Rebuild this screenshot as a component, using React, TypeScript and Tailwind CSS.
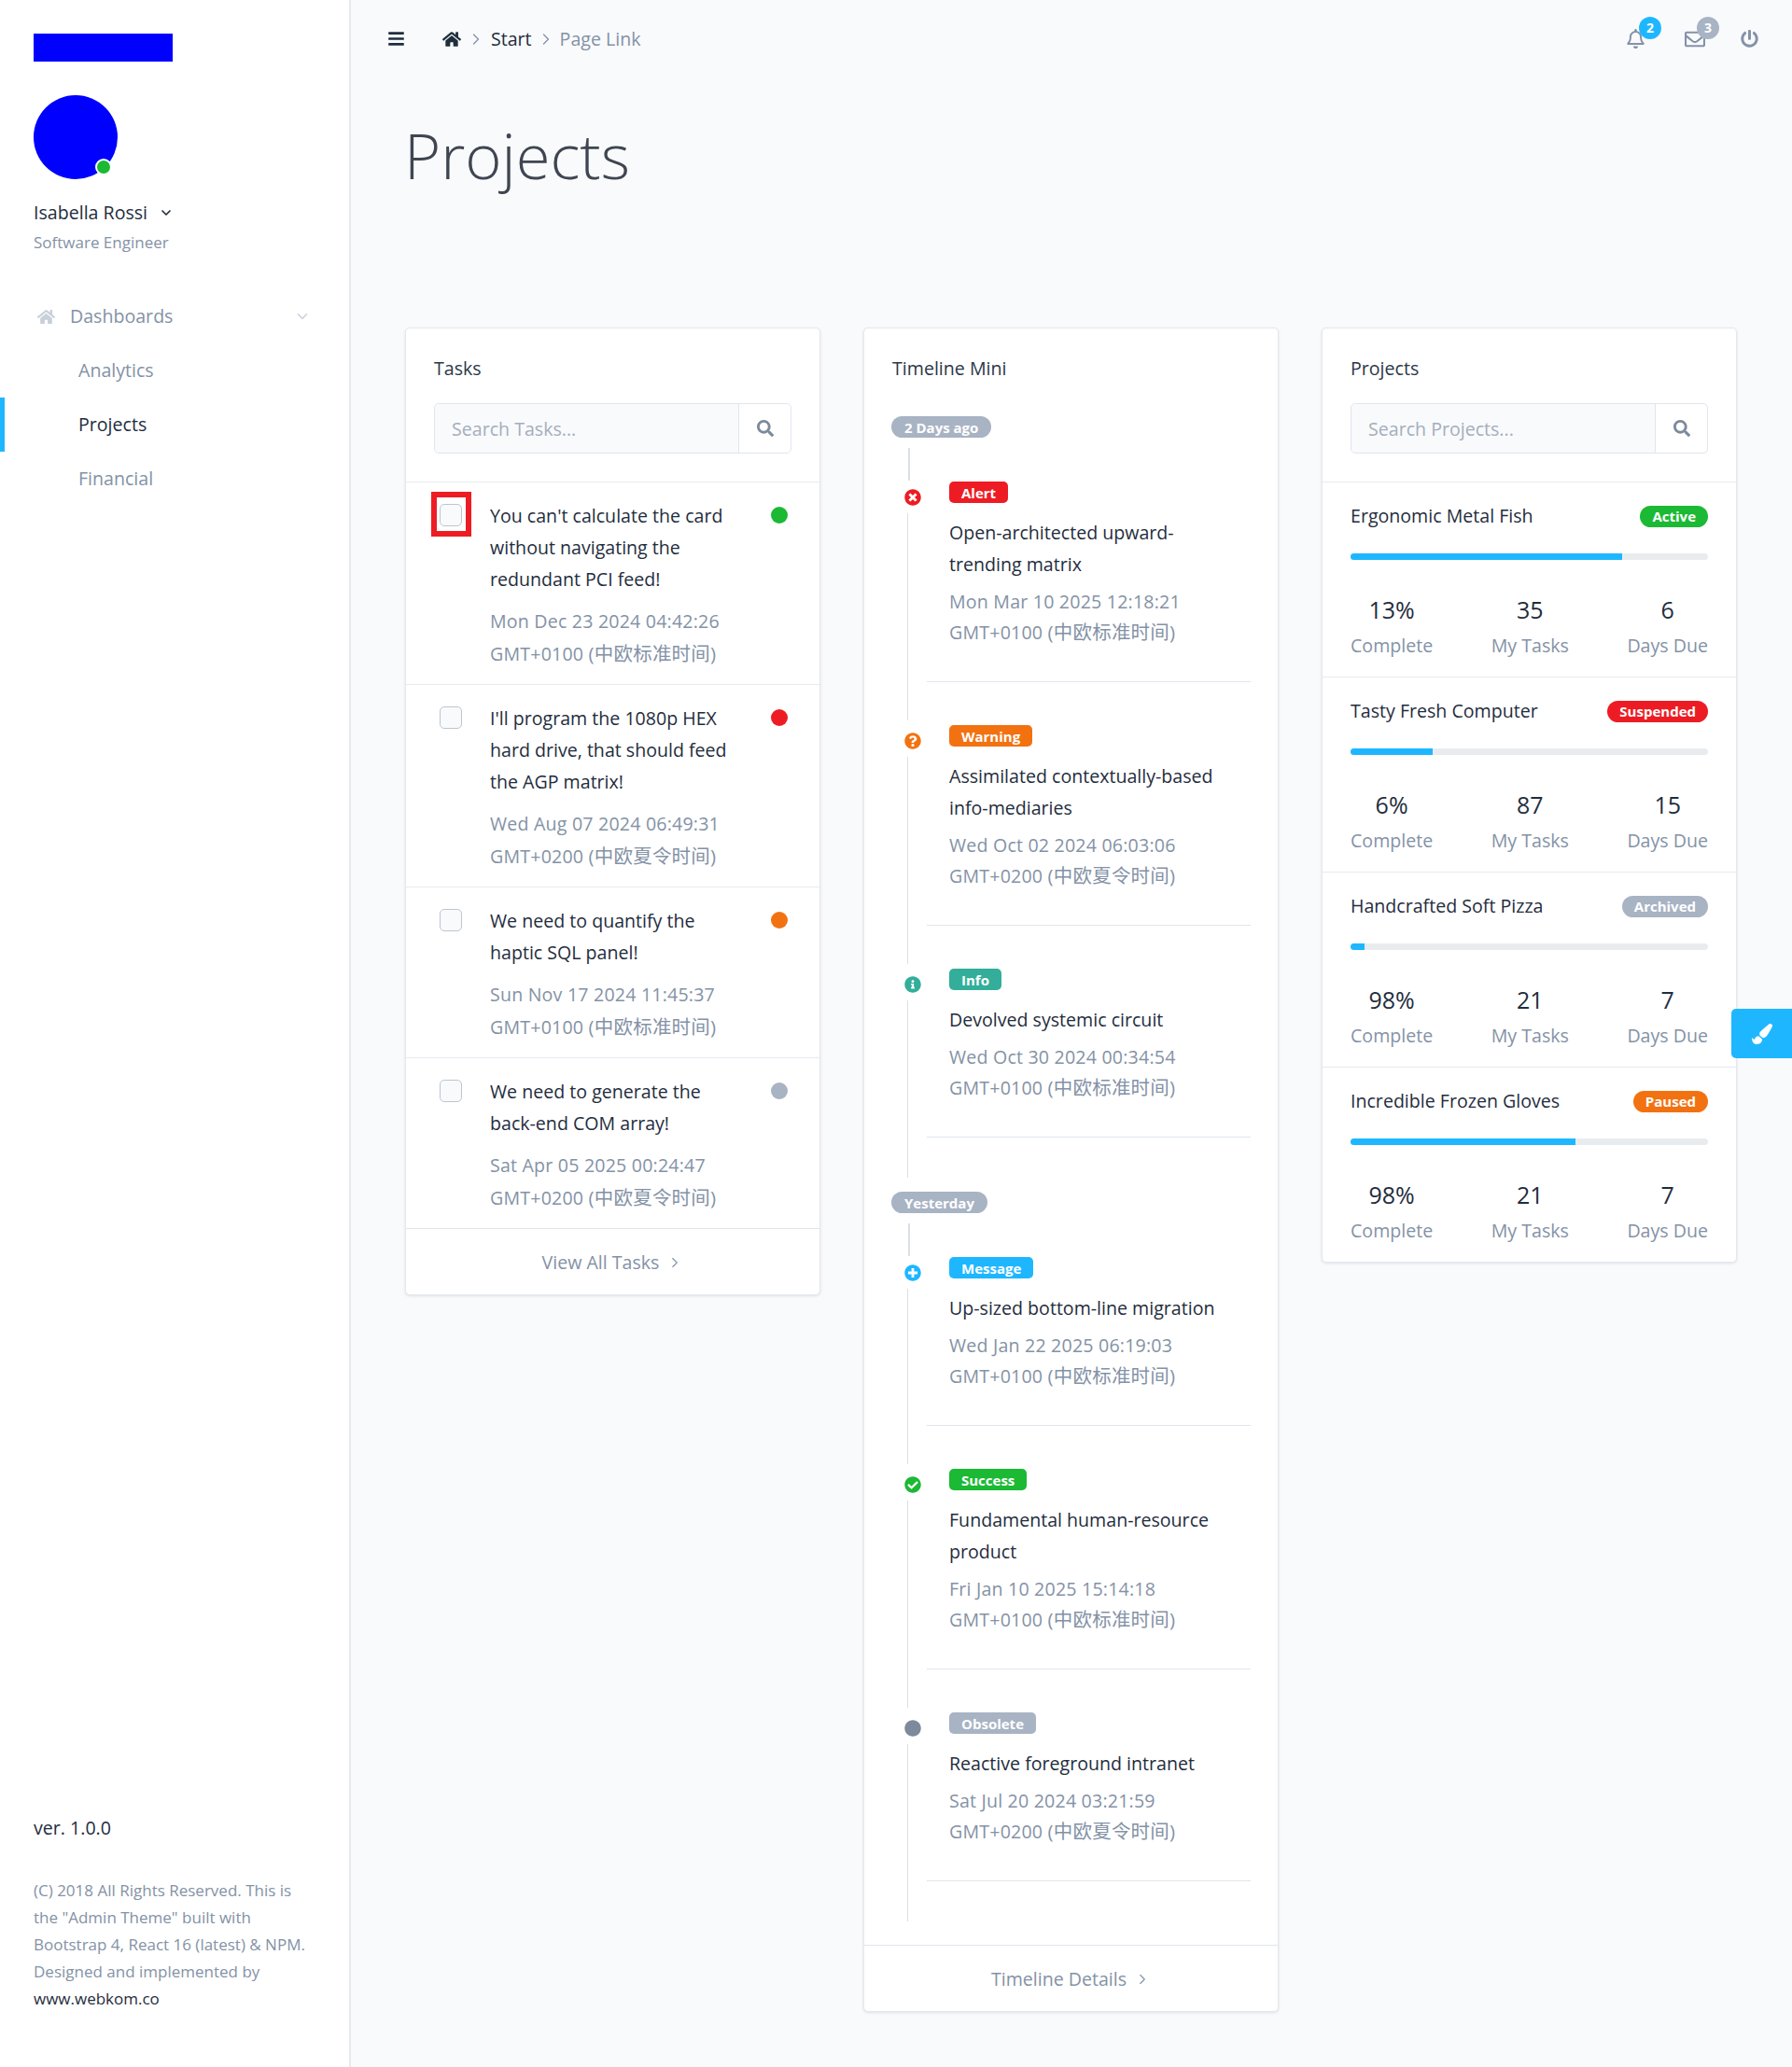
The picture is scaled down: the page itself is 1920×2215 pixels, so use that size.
import { ReactNode } from 'react'
import { ChevronDown, ChevronRight } from 'lucide-react'
import {
  FaBars,
  FaCheckCircle,
  FaCircle,
  FaHome,
  FaInfoCircle,
  FaPaintBrush,
  FaPlusCircle,
  FaPowerOff,
  FaQuestionCircle,
  FaRegBell,
  FaRegEnvelope,
  FaSearch,
  FaTimesCircle,
} from 'react-icons/fa'

const tasks = [
  {
    title: "You can't calculate the card\nwithout navigating the\nredundant PCI feed!",
    date: ['Mon Dec 23 2024 04:42:26', 'GMT+0100', '(中欧标准时间)'],
    dot: 'bg-[#1bb934]',
    marked: true,
  },
  {
    title: "I'll program the 1080p HEX\nhard drive, that should feed\nthe AGP matrix!",
    date: ['Wed Aug 07 2024 06:49:31', 'GMT+0200', '(中欧夏令时间)'],
    dot: 'bg-[#ed1c24]',
  },
  {
    title: 'We need to quantify the\nhaptic SQL panel!',
    date: ['Sun Nov 17 2024 11:45:37', 'GMT+0100', '(中欧标准时间)'],
    dot: 'bg-[#f27212]',
  },
  {
    title: 'We need to generate the\nback-end COM array!',
    date: ['Sat Apr 05 2025 00:24:47', 'GMT+0200', '(中欧夏令时间)'],
    dot: 'bg-[#a8b3c4]',
  },
]

const timeline = [
  {
    label: '2 Days ago',
    items: [
      {
        badge: 'Alert',
        color: 'bg-[#ed1c24]',
        icon: <FaTimesCircle className="text-[#ed1c24]" size={18} />,
        title: 'Open-architected upward-\ntrending matrix',
        date: ['Mon Mar 10 2025 12:18:21', 'GMT+0100', '(中欧标准时间)'],
      },
      {
        badge: 'Warning',
        color: 'bg-[#f27212]',
        icon: <FaQuestionCircle className="text-[#f27212]" size={18} />,
        title: 'Assimilated contextually-based\ninfo-mediaries',
        date: ['Wed Oct 02 2024 06:03:06', 'GMT+0200', '(中欧夏令时间)'],
      },
      {
        badge: 'Info',
        color: 'bg-[#33ae9a]',
        icon: <FaInfoCircle className="text-[#33ae9a]" size={18} />,
        title: 'Devolved systemic circuit',
        date: ['Wed Oct 30 2024 00:34:54', 'GMT+0100', '(中欧标准时间)'],
      },
    ],
  },
  {
    label: 'Yesterday',
    items: [
      {
        badge: 'Message',
        color: 'bg-[#1eb7ff]',
        icon: <FaPlusCircle className="text-[#1eb7ff]" size={18} />,
        title: 'Up-sized bottom-line migration',
        date: ['Wed Jan 22 2025 06:19:03', 'GMT+0100', '(中欧标准时间)'],
      },
      {
        badge: 'Success',
        color: 'bg-[#1bb934]',
        icon: <FaCheckCircle className="text-[#1bb934]" size={18} />,
        title: 'Fundamental human-resource\nproduct',
        date: ['Fri Jan 10 2025 15:14:18', 'GMT+0100', '(中欧标准时间)'],
      },
      {
        badge: 'Obsolete',
        color: 'bg-[#a8b3c4]',
        icon: <FaCircle className="text-[#7c8a9c]" size={18} />,
        title: 'Reactive foreground intranet',
        date: ['Sat Jul 20 2024 03:21:59', 'GMT+0200', '(中欧夏令时间)'],
      },
    ],
  },
]

const projects = [
  { name: 'Ergonomic Metal Fish', status: 'Active', color: 'bg-[#1bb934]', progress: 76, complete: '13%', tasks: 35, due: 6 },
  { name: 'Tasty Fresh Computer', status: 'Suspended', color: 'bg-[#ed1c24]', progress: 23, complete: '6%', tasks: 87, due: 15 },
  { name: 'Handcrafted Soft Pizza', status: 'Archived', color: 'bg-[#a8b3c4]', progress: 4, complete: '98%', tasks: 21, due: 7 },
  { name: 'Incredible Frozen Gloves', status: 'Paused', color: 'bg-[#f27212]', progress: 63, complete: '98%', tasks: 21, due: 7 },
]

const Card = ({ children }: { children: ReactNode }) => (
  <div className="flex flex-col rounded-[5px] border border-[#e4e8ee] bg-white shadow-[0_1px_3px_rgba(31,45,61,0.12)]">
    {children}
  </div>
)

const Search = ({ placeholder }: { placeholder: string }) => (
  <div className="mx-[30px] mt-[20px] flex h-[54px] rounded-[5px] border border-[#e0e6ed]">
    <div className="flex flex-1 items-center rounded-l-[5px] bg-[#f9fafc] pl-[18px] pt-[2px] text-[#a4aebd]">
      {placeholder}
    </div>
    <div className="flex w-[56px] items-center justify-center border-l border-[#e0e6ed] text-[#7c8a9c]">
      <FaSearch size={18} />
    </div>
  </div>
)

const CardFooter = ({ label }: { label: string }) => (
  <div className="flex h-[71px] items-center justify-center gap-2 border-t border-[#e0e6ed] pt-[1px] text-[#8492a6]">
    {label}
    <ChevronRight size={18} strokeWidth={1.5} />
  </div>
)

const DateLines = ({ date }: { date: string[] }) => (
  <>
    <span className="block tracking-[0.2px]">{date[0]}</span>
    <span className="block tracking-[0.2px]">
      {date[1]} <span className="text-[20.5px]">{date[2]}</span>
    </span>
  </>
)

const Sidebar = () => (
  <aside className="flex w-[376px] shrink-0 flex-col border-r-2 border-[#e6eaef] bg-white pb-[59px]">
    <div className="ml-9 mt-9 h-[30px] w-[149px] bg-[#0000ff]" />
    <div className="relative ml-9 mt-9 h-[90px] w-[90px] rounded-full bg-[#0000ff]">
      <span className="absolute left-[66px] top-[68px] h-[18px] w-[18px] rounded-full border-2 border-white bg-[#1bb934]" />
    </div>
    <div className="ml-9 mt-[19px] flex h-[34px] items-center gap-3 text-[#1f2d3d]">
      Isabella Rossi
      <ChevronDown size={16} strokeWidth={2.5} />
    </div>
    <div className="ml-9 h-[29px] text-[17px] leading-[29px] text-[#8492a6]">Software Engineer</div>
    <nav className="mt-[36px]">
      <div className="flex h-[58px] items-center pl-10 pr-[41px] text-[#8492a6]">
        <FaHome className="mr-[16px] text-[#c8d0da]" size={19} />
        <span className="flex-1">Dashboards</span>
        <ChevronDown className="text-[#c8d0da]" size={18} />
      </div>
      <div className="flex h-[58px] items-center pl-[84px] text-[#8492a6]">Analytics</div>
      <div className="flex h-[58px] items-center border-l-[5px] border-[#1eb7ff] pl-[79px] font-medium text-[#1f2d3d]">Projects</div>
      <div className="flex h-[58px] items-center pl-[84px] text-[#8492a6]">Financial</div>
    </nav>
    <div className="ml-9 mt-auto text-[#1f2d3d]">ver. 1.0.0</div>
    <p className="ml-9 mt-[35px] w-[330px] text-[17px] leading-[29px] text-[#8492a6]">
      (C) 2018 All Rights Reserved. This is
      <br />
      the "Admin Theme" built with
      <br />
      Bootstrap 4, React 16 (latest) &amp; NPM.
      <br />
      Designed and implemented by
      <br />
      <span className="text-[#1f2d3d]">www.webkom.co</span>
    </p>
  </aside>
)

const Topbar = () => (
  <header className="flex h-[83px] items-center pl-[39px] pr-[36px]">
    <FaBars className="text-[#1f2d3d]" size={19} />
    <FaHome className="ml-10 text-[#1f2d3d]" size={20} />
    <ChevronRight className="mx-[6px] text-[#8492a6]" size={20} strokeWidth={1.5} />
    <span className="text-[#1f2d3d]">Start</span>
    <ChevronRight className="mx-[5px] text-[#8492a6]" size={20} strokeWidth={1.5} />
    <span className="text-[#8492a6]">Page Link</span>
    <div className="ml-auto flex items-center text-[#8492a6]">
      <div className="relative flex">
        <FaRegBell size={21} />
        <span className="absolute -right-[17px] -top-[13px] flex h-6 w-6 items-center justify-center rounded-full bg-[#1eb7ff] text-[14px] font-bold text-white">2</span>
      </div>
      <div className="relative ml-[42px] flex">
        <FaRegEnvelope size={22} />
        <span className="absolute -right-[15px] -top-[13px] flex h-6 w-6 items-center justify-center rounded-full bg-[#a8b3c4] text-[14px] font-bold text-white">3</span>
      </div>
      <FaPowerOff className="ml-[38px]" size={19} />
    </div>
  </header>
)

const Tasks = () => (
  <Card>
    <div className="mx-[30px] mt-[26px] h-[34px] leading-[34px] text-[#2d3748]">Tasks</div>
    <Search placeholder="Search Tasks..." />
    <div className="mt-[30px] divide-y divide-[#e6eaef] border-t border-[#e6eaef]">
      {tasks.map((task) => (
        <div key={task.title} className="relative flex pb-[15px] pl-[36px] pr-[34px] pt-[19px]">
          <span className="mt-[4px] h-6 w-6 shrink-0 rounded-[5px] border border-[#bcc5d1] bg-[#f9fafc]" />
          <div className="ml-[30px] flex-1">
            <div className="whitespace-pre-line text-[#1f2d3d]">{task.title}</div>
            <div className="mt-[10px] leading-[35px] text-[#8492a6]">
              <DateLines date={task.date} />
            </div>
          </div>
          <span className={`mt-[7px] h-[18px] w-[18px] rounded-full ${task.dot}`} />
          {task.marked && (
            <span className="absolute left-[27px] top-[10px] h-[48px] w-[43px] border-[6px] border-[#ed1c24]" />
          )}
        </div>
      ))}
    </div>
    <CardFooter label="View All Tasks" />
  </Card>
)

const Timeline = () => (
  <Card>
    <div className="mx-[30px] mt-[26px] h-[34px] leading-[34px] text-[#2d3748]">Timeline Mini</div>
    <div className="mx-[29px] mb-[25px]">
      {timeline.map((section, sectionIndex) => (
        <div key={section.label} className={sectionIndex === 0 ? 'mt-[34px]' : 'mt-[15px]'}>
          <span className="flex h-[23px] w-fit items-center rounded-full bg-[#a8b3c4] px-[14px] text-[15px] font-bold text-white">
            {section.label}
          </span>
          {section.items.map((item, itemIndex) => {
            const first = itemIndex === 0
            const last = itemIndex === section.items.length - 1
            return (
              <div key={item.badge} className="flex">
                <div className="flex w-[38px] shrink-0 flex-col">
                  <span className={first ? 'ml-[18px] mt-[11px] h-[35px] w-[2px] bg-[#dbe0e7]' : 'ml-[17px] h-[41px] w-px bg-[#dbe0e7]'} />
                  <span className={`ml-[14px] flex h-[18px] ${first ? 'mt-[9px]' : 'mt-[13px]'}`}>{item.icon}</span>
                  <span className="ml-[17px] mt-[8px] w-px flex-1 bg-[#dbe0e7]" />
                </div>
                <div className={`flex-1 ${first ? 'pt-[47px]' : 'pt-[46px]'} ${last ? 'pb-[43px]' : ''}`}>
                  <div className="border-b border-[#e0e6ed] pb-[36px] pl-[24px]">
                    <span className={`flex h-[23px] w-fit items-center rounded-[5px] px-[13px] text-[15px] font-bold text-white ${item.color}`}>
                      {item.badge}
                    </span>
                    <div className="mt-[15px] whitespace-pre-line text-[#1f2d3d]">{item.title}</div>
                    <div className="mt-[6px] leading-[33px] text-[#8492a6]">
                      <DateLines date={item.date} />
                    </div>
                  </div>
                </div>
              </div>
            )
          })}
        </div>
      ))}
    </div>
    <CardFooter label="Timeline Details" />
  </Card>
)

const Stat = ({ value, label }: { value: string | number; label: string }) => (
  <div className="text-center">
    <div className="text-[25px] leading-[38px] text-[#1f2d3d]">{value}</div>
    <div className="mt-[3px] leading-[34px] text-[#8492a6]">{label}</div>
  </div>
)

const Projects = () => (
  <Card>
    <div className="mx-[30px] mt-[26px] h-[34px] leading-[34px] text-[#2d3748]">Projects</div>
    <Search placeholder="Search Projects..." />
    <div className="mt-[30px] divide-y divide-[#e6eaef] border-t border-[#e6eaef]">
      {projects.map((project) => (
        <div key={project.name} className="px-[30px] pb-[16px] pt-[19px]">
          <div className="flex items-center justify-between">
            <span className="text-[#1f2d3d]">{project.name}</span>
            <span className={`inline-flex h-[23px] items-center rounded-full px-[13px] text-[15px] font-bold text-white ${project.color}`}>
              {project.status}
            </span>
          </div>
          <div className="mt-[23px] h-[7px] overflow-hidden rounded-full bg-[#e9ecef]">
            <div className="h-full bg-[#1eb7ff]" style={{ width: `${project.progress}%` }} />
          </div>
          <div className="mt-[34px] flex justify-between">
            <Stat value={project.complete} label="Complete" />
            <Stat value={project.tasks} label="My Tasks" />
            <Stat value={project.due} label="Days Due" />
          </div>
        </div>
      ))}
    </div>
  </Card>
)

const App = () => (
  <div className="flex min-h-[2215px] bg-[#f9fafc] font-['Open_Sans','Noto_Sans_CJK_SC',sans-serif] text-[19.6px] leading-[34px]">
    <Sidebar />
    <main className="min-w-0 flex-1">
      <Topbar />
      <h1 className="ml-[57px] mt-[36px] text-[67px] font-light leading-[94px] text-[#3f4651]">Projects</h1>
      <div className="mt-[138px] grid grid-cols-3 items-start gap-[46px] pl-[58px] pr-[59px]">
        <Tasks />
        <Timeline />
        <Projects />
      </div>
    </main>
    <button className="absolute right-0 top-[1081px] flex h-[53px] w-[65px] items-center justify-center rounded-l-[5px] bg-[#1eb7ff] text-white">
      <FaPaintBrush size={22} />
    </button>
  </div>
)

export default App
